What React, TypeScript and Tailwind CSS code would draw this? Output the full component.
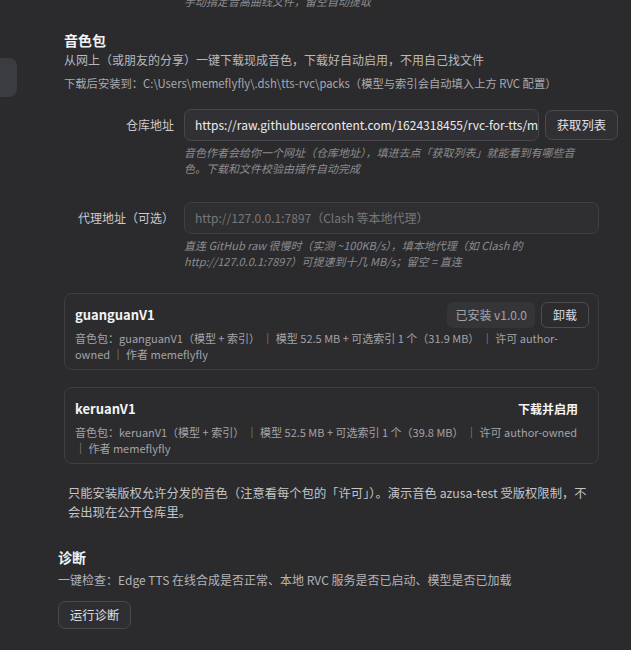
import React from "react";

const packs = [
  {
    id: "guanguanV1",
    desc: "音色包：guanguanV1（模型 + 索引） ｜ 模型 52.5 MB + 可选索引 1 个（31.9 MB） ｜ 许可 author-owned ｜ 作者 memeflyfly",
    installed: "v1.0.0",
  },
  {
    id: "keruanV1",
    desc: "音色包：keruanV1（模型 + 索引） ｜ 模型 52.5 MB + 可选索引 1 个（39.8 MB） ｜ 许可 author-owned ｜ 作者 memeflyfly",
    installed: null as string | null,
  },
];

function Hint({ children }: { children: React.ReactNode }) {
  return <p className="mt-[3px] w-[402px] pl-[120px] box-content text-[11px] italic leading-4 text-[#8b8b8f]">{children}</p>;
}

export default function App() {
  return (
    <div className="relative h-[650px] w-[631px] overflow-hidden bg-[#2b2b2d] font-['Noto_Sans_CJK_SC','Noto_Sans',sans-serif] text-[#d8d8da]">
      {/* sidebar item peeking in */}
      <div className="absolute left-[-12px] top-[58px] h-[39px] w-[29px] rounded-lg bg-[#3b3c40]" />

      <div className="pl-[58px] pr-[13px]">
        <p className="-mt-[7px] pl-[126px] text-[11px] italic leading-4 text-[#8b8b8f]">手动指定音高曲线文件，留空自动提取</p>

        {/* 音色包 */}
        <section className="mt-[21px] pl-[6px]">
          <h2 className="text-[14px] font-bold leading-5 text-[#f2f2f4]">音色包</h2>
          <p className="mt-px text-[12px] leading-[18px] text-[#b9b9bd]">从网上（或朋友的分享）一键下载现成音色，下载好自动启用，不用自己找文件</p>
          <p className="mt-[5px] text-[11.3px] leading-[18px] text-[#a9a9ad]">
            下载后安装到：C:\Users\memeflyfly\.dsh\tts-rvc\packs（模型与索引会自动填入上方 RVC 配置）
          </p>

          <div className="mt-[17px] flex items-center">
            <label className="w-[120px] pr-[10px] text-right text-[12px] text-[#c9c9cd]">仓库地址</label>
            <div className="h-[32px] w-[355px] overflow-hidden rounded-[7px] border border-[#46464b] bg-[#313135] px-[10px] text-[12px] leading-[30px] whitespace-nowrap text-[#ececee]">
              https://raw.githubusercontent.com/1624318455/rvc-for-tts/main
            </div>
            <button className="ml-[6px] h-[30px] rounded-[7px] border border-[#4a4a4f] bg-[#303034] px-[11px] text-[12.3px] text-[#e2e2e4]">获取列表</button>
          </div>
          <Hint>音色作者会给你一个网址（仓库地址），填进去点「获取列表」就能看到有哪些音色。下载和文件校验由插件自动完成</Hint>

          <div className="mt-[26px] flex items-center">
            <label className="w-[120px] pl-[14px] text-[12px] text-[#c9c9cd]">代理地址（可选）</label>
            <div className="h-[32px] w-[415px] rounded-[7px] border border-[#404044] bg-[#2f2f32] px-[10px] text-[12px] leading-[30px] whitespace-nowrap text-[#77777c]">
              http://127.0.0.1:7897（Clash 等本地代理）
            </div>
          </div>
          <Hint>直连 GitHub raw 很慢时（实测 ~100KB/s），填本地代理（如 Clash 的 http://127.0.0.1:7897）可提速到十几 MB/s；留空 = 直连</Hint>

          <div className="mt-[24px] flex w-[535px] flex-col gap-[17px]">
            {packs.map((p) => (
              <div key={p.id} className="rounded-[8px] border border-[#3e3e42] bg-[#2c2c2f] pb-[7px] pl-[10px] pr-[9px] pt-[8px]">
                <div className="flex h-[26px] items-center">
                  <span className="flex-1 text-[13px] font-bold text-[#f4f4f6]">{p.id}</span>
                  {p.installed ? (
                    <>
                      <span className="flex h-[26px] items-center rounded-[6px] bg-[#353538] px-[8px] text-[12px] text-[#a5a5a9]">已安装 {p.installed}</span>
                      <button className="ml-[6px] h-[26px] rounded-[6px] border border-[#4c4c51] px-[11px] text-[12px] text-[#dcdcde]">卸载</button>
                    </>
                  ) : (
                    <button className="h-[26px] px-[11px] text-[12px] font-semibold text-[#f4f4f6]">下载并启用</button>
                  )}
                </div>
                <p className="mt-[2px] text-[11px] leading-4 text-[#a3a3a7]">{p.desc}</p>
              </div>
            ))}
          </div>

          <p className="mt-[20px] w-[535px] px-[4px] text-[12.3px] leading-[19px] text-[#c4c4c8]">
            只能安装版权允许分发的音色（注意看每个包的「许可」）。演示音色 azusa-test 受版权限制，不会出现在公开仓库里。
          </p>
        </section>

        {/* 诊断 */}
        <section className="mt-[25px]">
          <h2 className="text-[14px] font-bold leading-5 text-[#f2f2f4]">诊断</h2>
          <p className="mt-[4px] text-[12px] leading-[18px] text-[#b4b4b8]">一键检查：Edge TTS 在线合成是否正常、本地 RVC 服务是否已启动、模型是否已加载</p>
          <button className="mt-[12px] h-[28px] rounded-[7px] border border-[#48484d] bg-[#2f2f33] px-[11px] text-[12.3px] text-[#e2e2e4]">运行诊断</button>
        </section>
      </div>
    </div>
  );
}
